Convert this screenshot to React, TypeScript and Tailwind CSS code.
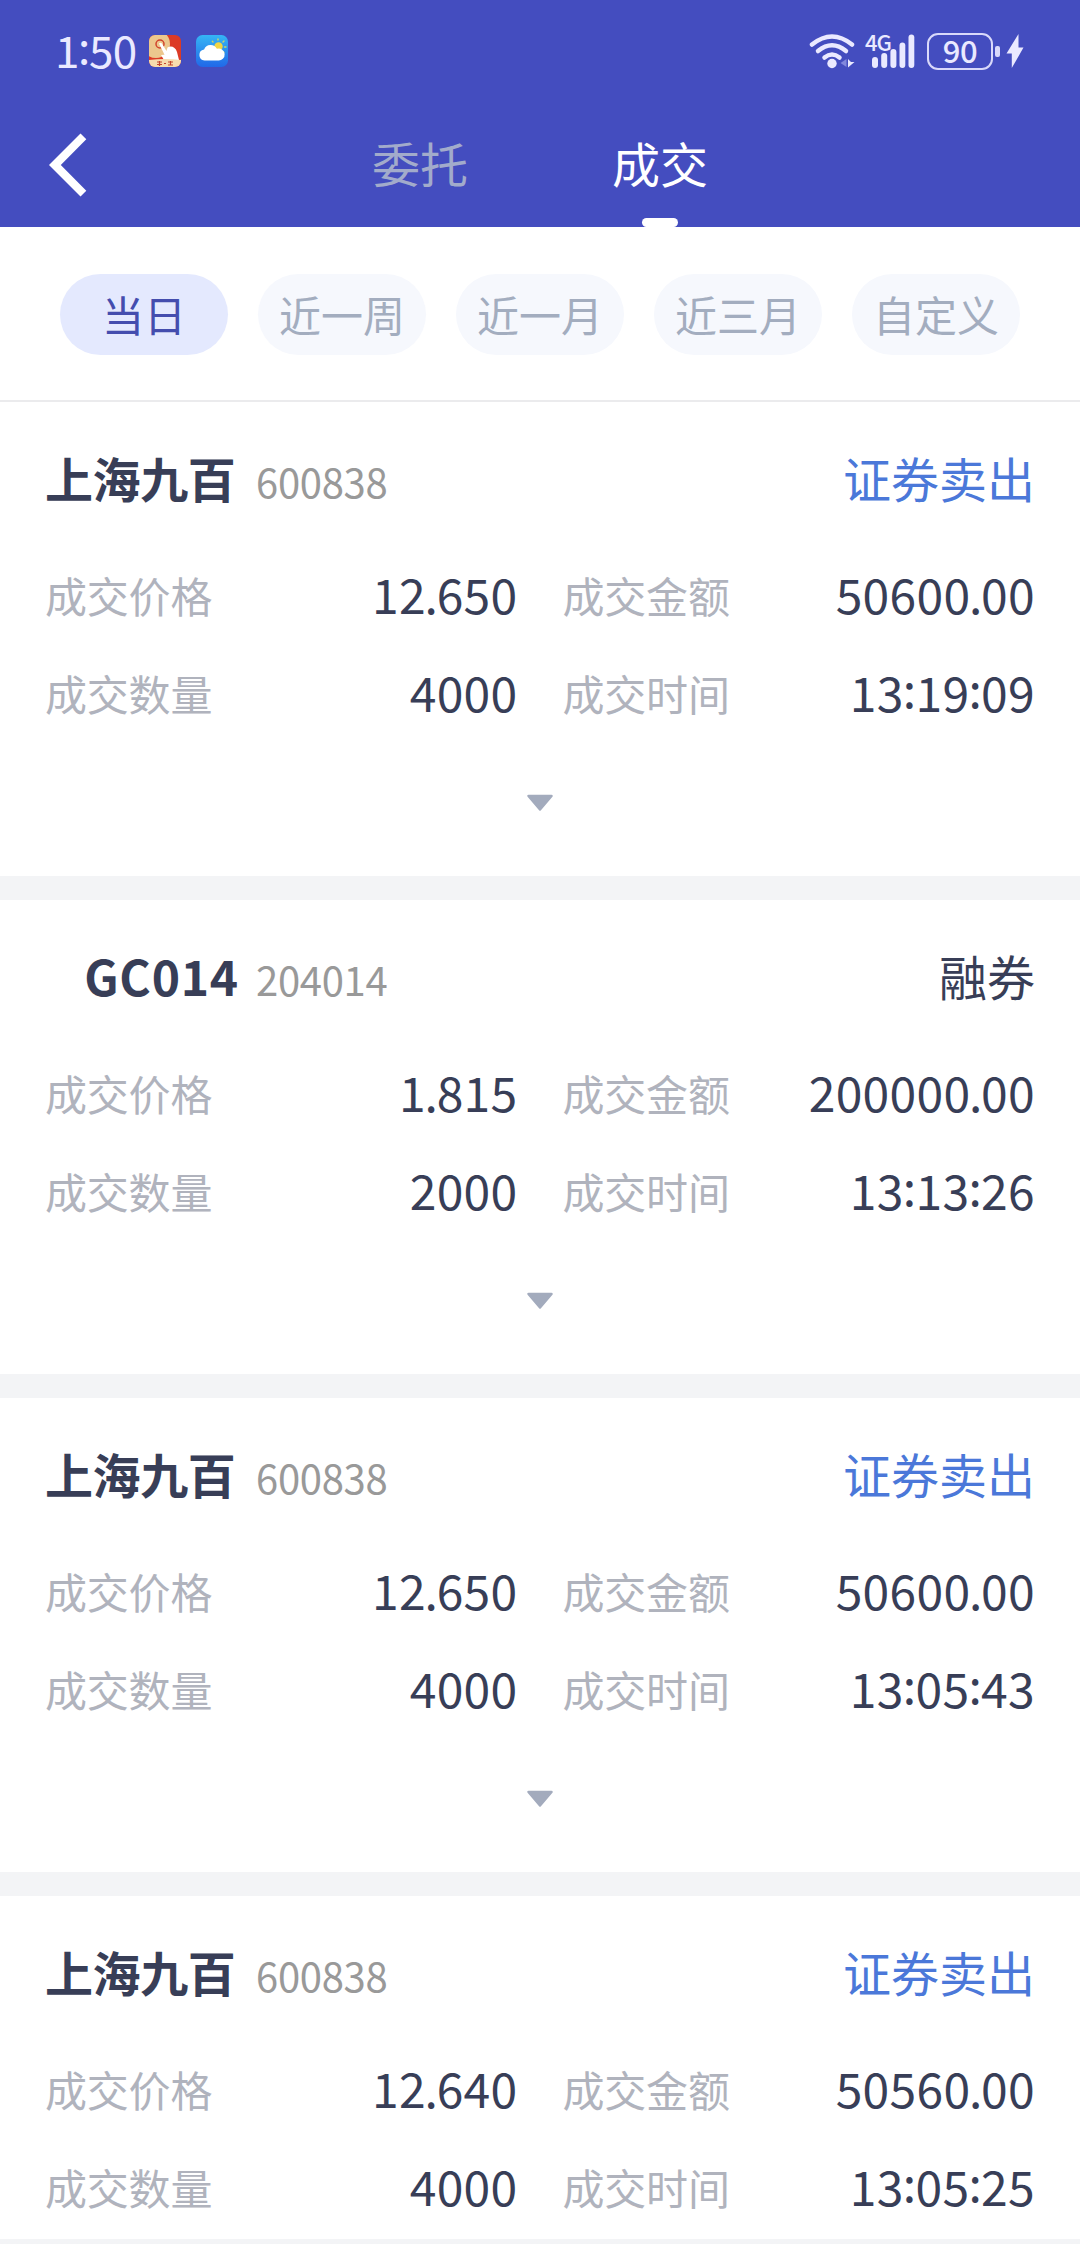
import clsx from 'clsx';

interface Deal {
  name: string;
  code: string;
  side: string;
  sell: boolean;
  price: string;
  amount: string;
  volume: string;
  time: string;
}

const RANGES = ['当日', '近一周', '近一月', '近三月', '自定义'];

const DEALS: Deal[] = [
  { name: '上海九百', code: '600838', side: '证券卖出', sell: true, price: '12.650', amount: '50600.00', volume: '4000', time: '13:19:09' },
  { name: 'GC014', code: '204014', side: '融券', sell: false, price: '1.815', amount: '200000.00', volume: '2000', time: '13:13:26' },
  { name: '上海九百', code: '600838', side: '证券卖出', sell: true, price: '12.650', amount: '50600.00', volume: '4000', time: '13:05:43' },
  { name: '上海九百', code: '600838', side: '证券卖出', sell: true, price: '12.640', amount: '50560.00', volume: '4000', time: '13:05:25' },
];

const TradeAppIcon = () => (
  <svg width="32" height="32" viewBox="0 0 32 32" className="ml-[12px]">
    <defs>
      <clipPath id="trade-clip">
        <rect width="32" height="32" rx="6" />
      </clipPath>
    </defs>
    <g clipPath="url(#trade-clip)">
      <rect width="32" height="32" fill="#dc3a25" />
      <circle cx="7" cy="9" r="14" fill="#ecc78d" />
      <circle cx="11" cy="9" r="4" fill="none" stroke="#d0432c" strokeWidth="1.5" />
      <path d="M10 8.5c1-1.2 2.500-.8 3.200.4l4.300 7 1-3.500c4-2 8 0 9.500 4.500l2 8H15l-3-5 3.500-.2z" fill="#fff" />
      <path d="M0 25q16-2 32 0v7H0z" fill="#f6dcae" />
      <path d="M8 27h5M8 29.500h5M10.500 26v5M15 28.500h2M19 27h5M19 30h5M21.500 26v4" stroke="#c4452d" strokeWidth="1.200" />
    </g>
  </svg>
);

const WeatherAppIcon = () => (
  <svg width="32" height="32" viewBox="0 0 32 32" className="ml-[15px]">
    <defs>
      <linearGradient id="sky" x1="0" y1="0" x2="0" y2="1">
        <stop offset="0" stopColor="#35b5f5" />
        <stop offset="1" stopColor="#2168e8" />
      </linearGradient>
    </defs>
    <rect width="32" height="32" rx="6.500" fill="url(#sky)" />
    <circle cx="22.500" cy="11.500" r="4.200" fill="#f2d544" />
    <path d="M22 5v-1M27 7l1-1M28.500 12h1.500M17 7l-.7-.7M27 16.500l1 1" stroke="#c9d66a" strokeWidth="1.400" strokeLinecap="round" />
    <path d="M8.500 25.500a5.600 5.600 0 0 1-.4-11.100 7 7 0 0 1 12.800-.6 6 6 0 1 1 1.100 11.700z" fill="#fff" />
  </svg>
);

const WifiIcon = () => (
  <svg width="46" height="36" viewBox="0 0 46 36" fill="none">
    <g stroke="#eae9ff" strokeWidth="4.500" strokeLinecap="round">
      <path d="M3 11.500Q23-4.500 43 11.500" />
      <path d="M9 18Q23 6.500 37 18" />
      <path d="M15.500 24.500Q23 18.500 30.500 24.500" />
    </g>
    <circle cx="23" cy="30.500" r="4.700" fill="#eae9ff" />
    <path d="M37.500 26v8l-6-4z" fill="#8288dc" />
    <path d="M39 26v8.500l6.500-5.500H42z" fill="#eae9ff" />
  </svg>
);

const SignalIcon = () => (
  <div className="relative ml-[9px] h-[36px] w-[52px]">
    <svg width="52" height="36" viewBox="0 0 52 36" fill="#eae9ff">
      <rect x="8" y="24" width="6" height="11" rx="3" />
      <rect x="17.200" y="20" width="6" height="15" rx="3" />
      <rect x="26.400" y="16" width="6" height="19" rx="3" />
      <rect x="35.500" y="9.500" width="5.800" height="25.500" rx="2.900" />
      <rect x="44.500" y="1.500" width="5.800" height="33.500" rx="2.900" />
    </svg>
    <span className="absolute -top-[2px] left-[1px] text-[22px] font-medium leading-[20px] tracking-[-1px]">4G</span>
  </div>
);

const Battery = () => (
  <div className="ml-[11px] flex items-center">
    <div className="flex h-[37px] w-[66px] items-center justify-center rounded-[11px] border-[2.5px] border-[#d9d9fa] pb-[4px] text-[31px] font-medium leading-none tracking-[-0.5px]">
      <span>90</span>
    </div>
    <div className="ml-[2px] h-[11px] w-[5px] rounded-[2px] bg-[#d9d9fa]" />
    <svg width="18" height="36" viewBox="0 0 18 36" className="ml-[6px]" fill="#eae9ff">
      <path d="M12.500 1v13.500h5L5.800 35V20.500H.5z" />
    </svg>
  </div>
);

// Separators sit tighter than in the stock face, and the colon is centred on the digits.
const Digits = ({ value }: { value: string }) => (
  <>
    {value.split(/([.:])/).map((part, i) => {
      if (part === ':') return <span key={i} className="relative -top-[0.09em] -mx-[0.02em]">:</span>;
      if (part === '.') return <span key={i} className="-mx-[0.03em]">.</span>;
      return <span key={i}>{part}</span>;
    })}
  </>
);

const Header = () => (
  <header className="h-[227px] bg-[#444dbf]">
    <div className="flex h-[102px] items-center pl-[55px] pr-[56px] text-[#eae9ff]">
      <span className="w-[82px] whitespace-nowrap pb-[5px] text-[44px] leading-none tracking-[-0.5px]">
        <Digits value="1:50" />
      </span>
      <TradeAppIcon />
      <WeatherAppIcon />
      <div className="ml-auto flex items-center">
        <WifiIcon />
        <SignalIcon />
        <Battery />
      </div>
    </div>
    <div className="flex h-[125px] text-[48px]">
      <button className="w-[300px] pl-[49px]">
        <svg width="38" height="64" viewBox="0 0 38 64" fill="#fff">
          <path d="M31.500 0.500 37.300 6.300 11.800 32 37.300 57.700 31.500 63.500 0 32z" />
        </svg>
      </button>
      <button className="flex h-[116px] w-[240px] items-center justify-center pt-[3px] text-[#a2abcb]">委托</button>
      <button className="flex w-[240px] flex-col items-center text-white">
        <span className="flex h-[116px] items-center pt-[3px]">成交</span>
        <span className="h-[9px] w-[36px] rounded-[4.5px] bg-white" />
      </button>
    </div>
  </header>
);

const RangeTabs = () => (
  <div className="flex h-[175px] shrink-0 gap-[30px] border-b-2 border-[#ebebed] bg-white px-[60px] pt-[47px]">
    {RANGES.map((range, i) => (
      <button
        key={range}
        className={clsx(
          'h-[81px] w-[168px] rounded-full pb-[2px] text-[42px] leading-none',
          i === 0 ? 'bg-[#e4e9fe] text-[#444dae]' : 'bg-[#f6f8fd] text-[#a3adbf]'
        )}
      >
        {range}
      </button>
    ))}
  </div>
);

const Field = ({ label, value }: { label: string; value: string }) => (
  <div className="flex h-[98px] items-center justify-between leading-none">
    <span className="pb-[3px] text-[42px] tracking-[-0.2px] text-[#b0b3bd]">{label}</span>
    <span className="pb-[6px] text-[48px] tracking-[0.3px] text-[#383e57]">
      <Digits value={value} />
    </span>
  </div>
);

const DealCard = ({ deal }: { deal: Deal }) => {
  const latin = /^[A-Z]/.test(deal.name);

  return (
    <section className="h-[474px] shrink-0 bg-white px-[45px] pt-[45px]">
      <div className="flex h-[60px] items-baseline justify-between leading-[60px]">
        <div className="flex items-baseline">
          <h2
            className={clsx(
              'w-[194px] text-[48px] font-bold text-[#383e57]',
              latin ? 'text-right tracking-[0.8px]' : 'tracking-[-0.4px]'
            )}
          >
            {deal.name}
          </h2>
          <span className="ml-[17px] text-[40px] tracking-[-0.3px] text-[#999]">{deal.code}</span>
        </div>
        <span className={clsx('text-[48px]', deal.sell ? 'text-[#4b78d9]' : 'text-[#383e57]')}>{deal.side}</span>
      </div>
      <div className="mt-[40px] grid grid-cols-2 gap-x-[45px]">
        <Field label="成交价格" value={deal.price} />
        <Field label="成交金额" value={deal.amount} />
        <Field label="成交数量" value={deal.volume} />
        <Field label="成交时间" value={deal.time} />
      </div>
      <svg width="28" height="18" viewBox="0 0 28 18" className="mx-auto mt-[51px]">
        <path d="M2.500 2h23L14 15.500z" fill="#a3abbd" stroke="#a3abbd" strokeWidth="2.500" strokeLinejoin="round" />
      </svg>
    </section>
  );
};

export default function App() {
  return (
    <div className="flex h-[2244px] w-[1080px] flex-col overflow-hidden bg-[#f3f4f6] font-['Noto_Sans_CJK_SC',sans-serif]">
      <Header />
      <div className="flex h-[2012px] flex-col overflow-hidden">
        <RangeTabs />
        <main className="flex flex-col gap-6">
          {DEALS.map((deal) => (
            <DealCard key={deal.time} deal={deal} />
          ))}
        </main>
      </div>
    </div>
  );
}
